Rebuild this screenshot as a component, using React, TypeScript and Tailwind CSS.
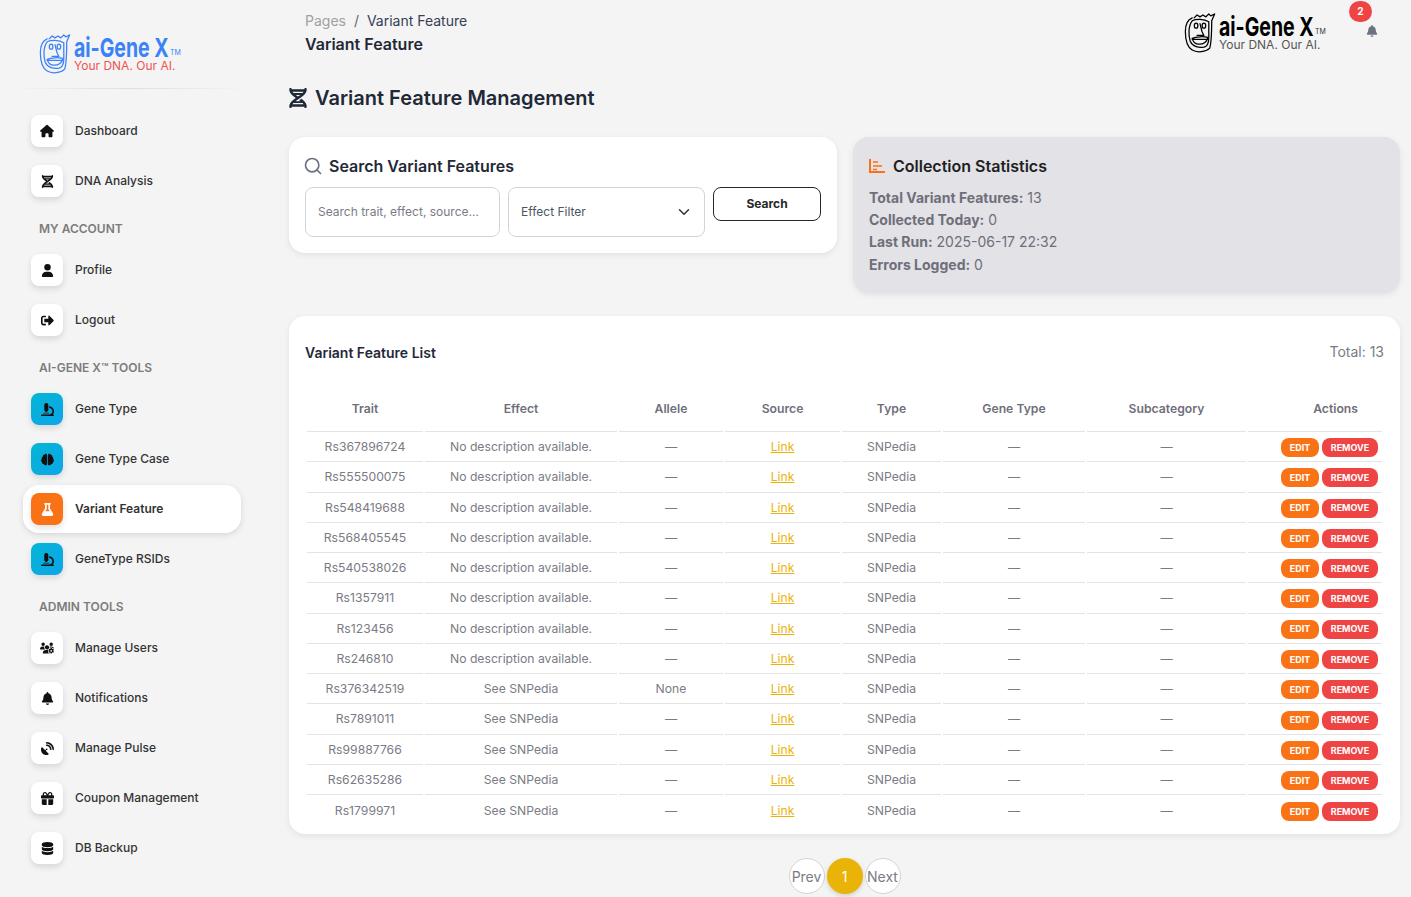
import type { ReactNode } from "react";
import { Search, ChevronDown } from "lucide-react";
import { FaSignOutAlt, FaMicroscope, FaBrain, FaFlask } from "react-icons/fa";
import { FaBell, FaDatabase, FaDna, FaGift, FaHouse, FaSatelliteDish, FaUser, FaUsersGear } from "react-icons/fa6";

const rows = [
  ["Rs367896724", "No description available.", "—"],
  ["Rs555500075", "No description available.", "—"],
  ["Rs548419688", "No description available.", "—"],
  ["Rs568405545", "No description available.", "—"],
  ["Rs540538026", "No description available.", "—"],
  ["Rs1357911", "No description available.", "—"],
  ["Rs123456", "No description available.", "—"],
  ["Rs246810", "No description available.", "—"],
  ["Rs376342519", "See SNPedia", "None"],
  ["Rs7891011", "See SNPedia", "—"],
  ["Rs99887766", "See SNPedia", "—"],
  ["Rs62635286", "See SNPedia", "—"],
  ["Rs1799971", "See SNPedia", "—"],
];

const columns = ["Trait", "Effect", "Allele", "Source", "Type", "Gene Type", "Subcategory"];
const widths = [116, 192, 104, 115, 99, 142, 159, 134];

function Face({ className }: { className: string }) {
  return (
    <svg viewBox="0 0 32 42" className={className} fill="none" stroke="currentColor" strokeWidth="1.3" strokeLinecap="round" strokeLinejoin="round">
      <path d="M8 6 C3 8 1 13 1 20 C1 29 3 36 8 39 C13 42 22 41 26 37 C28 30 28 20 28 9 L31 2 L27 4 L25 2 L22 5 L19 3 L16 5 L13 3 L10 6" />
      <path d="M8 9 C4 14 4 24 6 30 C8 35 14 37 20 36 C24 35 25 31 25 26 L25 10 C20 7 12 7 8 9 Z" />
      <ellipse cx="12" cy="14" rx="1.8" ry="2.6" />
      <ellipse cx="20" cy="14" rx="1.8" ry="2.6" />
      <path d="M16 12 L18 20 L20 24 L13 24" />
      <path d="M8 27 C12 25 20 25 24 26 C23 31 19 33 15 33 C11 33 9 31 8 27 Z M8 28 L24 28" />
    </svg>
  );
}

function Logo({ main, sub, tm }: { main: string; sub: string; tm: string }) {
  return (
    <div className="flex items-start gap-[3px]">
      <Face className={`h-[41px] w-[32px] shrink-0 ${main}`} />
      <div className="flex w-[107px] flex-col pt-[5px]">
        <div className="flex h-[20px] items-end">
          <span className={`inline-block w-[96px] origin-left scale-x-[0.75] whitespace-nowrap text-[26px] leading-[20px] font-bold ${main}`}>ai-Gene X</span>
          <span className={`text-[7px] leading-[10px] ${tm}`}>TM</span>
        </div>
        <span className={`text-[12px] leading-[15px] ${sub}`}>Your DNA. Our AI.</span>
      </div>
    </div>
  );
}

function NavItem({ icon, label, tone = "white", active = false }: { icon: ReactNode; label: string; tone?: "white" | "blue" | "orange"; active?: boolean }) {
  const toneClass =
    tone === "blue"
      ? "bg-gradient-to-br from-[#06b6d4] to-[#0ea5e9] text-[#111]"
      : tone === "orange"
        ? "bg-[#f97316] text-white"
        : "bg-white text-[#111]";
  return (
    <div className={`mb-[2px] flex h-12 items-center gap-3 rounded-2xl px-2 ${active ? "bg-white shadow-[0_2px_6px_rgba(0,0,0,0.12)]" : ""}`}>
      <span className={`flex size-8 items-center justify-center rounded-lg text-[13px] shadow-[0_3px_6px_rgba(0,0,0,0.12)] ${toneClass}`}>{icon}</span>
      <span className={`text-[12px] text-[#333] ${active ? "font-semibold" : "font-medium"}`}>{label}</span>
    </div>
  );
}

function NavLabel({ children }: { children: ReactNode }) {
  return <div className="pt-[14px] pb-[9px] pl-4 text-[12px] leading-4 font-semibold text-[#7c7c7c]">{children}</div>;
}

function Sidebar() {
  return (
    <aside className="w-[265px] shrink-0 pl-[23px]">
      <div className="flex h-[88px] items-end pb-[14px] pl-[16px]">
        <Logo main="text-[#3b82f6]" sub="text-[#ef5350]" tm="text-[#3b82f6]" />
      </div>
      <div className="-ml-[13px] h-px w-[240px] bg-gradient-to-r from-transparent via-[#dedede] to-transparent" />
      <div className="w-[218px] pt-[18px]">
        <NavItem icon={<FaHouse className="text-[14px]" />} label="Dashboard" />
        <NavItem icon={<FaDna />} label="DNA Analysis" />
        <NavLabel>MY ACCOUNT</NavLabel>
        <NavItem icon={<FaUser />} label="Profile" />
        <NavItem icon={<FaSignOutAlt />} label="Logout" />
        <NavLabel>AI-GENE X™ TOOLS</NavLabel>
        <NavItem icon={<FaMicroscope />} label="Gene Type" tone="blue" />
        <NavItem icon={<FaBrain />} label="Gene Type Case" tone="blue" />
        <NavItem icon={<FaFlask />} label="Variant Feature" tone="orange" active />
        <NavItem icon={<FaMicroscope />} label="GeneType RSIDs" tone="blue" />
        <NavLabel>ADMIN TOOLS</NavLabel>
        <NavItem icon={<FaUsersGear className="text-[14px]" />} label="Manage Users" />
        <NavItem icon={<FaBell />} label="Notifications" />
        <NavItem icon={<FaSatelliteDish />} label="Manage Pulse" />
        <NavItem icon={<FaGift />} label="Coupon Management" />
        <NavItem icon={<FaDatabase />} label="DB Backup" />
      </div>
    </aside>
  );
}

function ChartIcon() {
  return (
    <svg viewBox="0 0 16 14" className="h-[14px] w-[16px] text-[#f97316]" fill="none" stroke="currentColor" strokeWidth="2">
      <path d="M1 0 V13 H16" />
      <path d="M4 3 H9 M4 7 H13 M4 10.5 H8" strokeWidth="1.6" />
    </svg>
  );
}

function StatLine({ label, value }: { label: string; value: string }) {
  return (
    <p className="text-[14px] leading-[22px]">
      <span className="font-bold">{label}</span> {value}
    </p>
  );
}

function VariantTable() {
  const line = "border-b border-[#e4e4e4]";
  return (
    <table className="w-[1079px] table-fixed border-separate border-spacing-[2px]">
      <colgroup>
        {widths.map((w, i) => (
          <col key={i} style={{ width: w }} />
        ))}
      </colgroup>
      <thead>
        <tr>
          {columns.map((c) => (
            <th key={c} className={`h-[46px] pt-[1px] text-center text-[12.2px] font-semibold text-[#6f6f7a] ${line}`}>
              {c}
            </th>
          ))}
          <th className={`h-[46px] pt-[1px] pr-6 text-right text-[12.2px] font-semibold text-[#6f6f7a] ${line}`}>Actions</th>
        </tr>
      </thead>
      <tbody className="text-[12.2px] text-[#7b7b85]">
        {rows.map((r, i) => {
          const cell = `text-center ${i < 12 ? line : ""}`;
          return (
            <tr key={r[0]}>
              <td className={`h-[28.28px] pb-[1px] ${cell}`}>{r[0]}</td>
              <td className={`pb-[1px] ${cell}`}>{r[1]}</td>
              <td className={`pb-[1px] ${cell}`}>{r[2]}</td>
              <td className={`pb-[1px] ${cell}`}>
                <a className="text-[#eab308] underline">Link</a>
              </td>
              <td className={`pb-[1px] ${cell}`}>SNPedia</td>
              <td className={`pb-[1px] ${cell}`}>—</td>
              <td className={`pb-[1px] ${cell}`}>—</td>
              <td className={cell}>
                <div className="flex justify-end gap-[3px] pr-1">
                  <button className="h-[19px] w-[38px] rounded-lg bg-[#f97316] text-[9px] font-bold text-white">EDIT</button>
                  <button className="h-[19px] w-[56px] rounded-lg bg-[#ef4444] text-[9px] font-bold text-white">REMOVE</button>
                </div>
              </td>
            </tr>
          );
        })}
      </tbody>
    </table>
  );
}

export default function App() {
  return (
    <div className="flex h-screen overflow-hidden bg-[#f4f4f4] font-['Inter',sans-serif]">
      <Sidebar />
      <main className="min-w-0 flex-1 pr-[11px] pl-6">
        <header className="flex h-[70px] justify-between pr-[23px] pl-4">
          <div className="pt-[12px]">
            <p className="text-[14px] leading-[18px] text-[#a0a0a0]">
              Pages <span className="mx-1 text-[#666]">/</span> <span className="text-[#344054]">Variant Feature</span>
            </p>
            <p className="mt-[3px] text-[16px] leading-[22px] font-semibold text-[#1f2937]">Variant Feature</p>
          </div>
          <div className="flex items-start pt-[12px]">
            <Logo main="text-black" sub="text-[#555]" tm="text-[#333]" />
            <div className="relative ml-[23px] w-[28px]">
              <span className="absolute -top-[11px] left-0 flex h-[21px] w-[23px] items-center justify-center rounded-full bg-[#ef4444] text-[10px] font-bold text-white">2</span>
              <FaBell className="absolute top-[13px] left-[17px] text-[12px] text-[#6b7280]" />
            </div>
          </div>
        </header>
        <h1 className="mt-[14px] flex h-7 items-center gap-2 text-[20px] font-semibold text-[#1f2937]">
          <FaDna className="w-[18px] text-[20px]" />
          Variant Feature Management
        </h1>
        <div className="mt-[25px] grid grid-cols-[548px_547px] items-start gap-4">
          <section className="h-[116px] rounded-2xl bg-white p-4 shadow-[0_2px_6px_rgba(0,0,0,0.08)]">
            <h2 className="flex h-[26px] items-center gap-[6px] text-[16px] font-semibold text-[#1f2937]">
              <Search className="-ml-[2px] size-5 text-[#6b7280]" strokeWidth={2} />
              Search Variant Features
            </h2>
            <div className="mt-2 flex items-start gap-2">
              <div className="flex h-[50px] w-[195px] items-center rounded-lg border border-[#d4d4d8] px-3 text-[12px] text-[#7b7b85]">Search trait, effect, source...</div>
              <div className="flex h-[50px] w-[197px] items-center justify-between rounded-lg border border-[#d4d4d8] pr-[11px] pl-3 text-[12px] text-[#4b5563]">
                Effect Filter
                <ChevronDown className="size-[18px] text-[#333]" />
              </div>
              <button className="h-[34px] w-[108px] rounded-lg border border-[#27272a] text-[12px] font-bold text-[#27272a]">Search</button>
            </div>
          </section>
          <section className="h-[156px] rounded-2xl bg-[#e2e2e7] p-4 text-[#6f6f7a] shadow-[0_2px_6px_rgba(0,0,0,0.08)]">
            <h2 className="mb-[8px] flex h-[26px] items-center gap-2 text-[16px] font-semibold text-[#1f1f23]">
              <ChartIcon />
              Collection Statistics
            </h2>
            <StatLine label="Total Variant Features:" value="13" />
            <StatLine label="Collected Today:" value="0" />
            <StatLine label="Last Run:" value="2025-06-17 22:32" />
            <div className="mt-[1px]">
              <StatLine label="Errors Logged:" value="0" />
            </div>
          </section>
        </div>
        <section className="mt-[23px] h-[518px] rounded-2xl bg-white px-4 shadow-[0_2px_6px_rgba(0,0,0,0.08)]">
          <div className="flex h-[68px] items-start justify-between pt-[26px]">
            <h3 className="text-[14px] font-semibold text-[#1f2937]">Variant Feature List</h3>
            <span className="-mt-[1px] text-[14px] text-[#7b7b85]">Total: 13</span>
          </div>
          <VariantTable />
        </section>
        <nav className="mt-[24px] flex justify-center gap-[2px] text-[14px]">
          <button className="size-9 rounded-full border border-[#d4d4d8] bg-white text-[#7b7b85]">Prev</button>
          <button className="size-9 rounded-full bg-[#eab308] text-white shadow-[0_2px_5px_rgba(0,0,0,0.15)]">1</button>
          <button className="size-9 rounded-full border border-[#d4d4d8] bg-white text-[#7b7b85]">Next</button>
        </nav>
      </main>
    </div>
  );
}
